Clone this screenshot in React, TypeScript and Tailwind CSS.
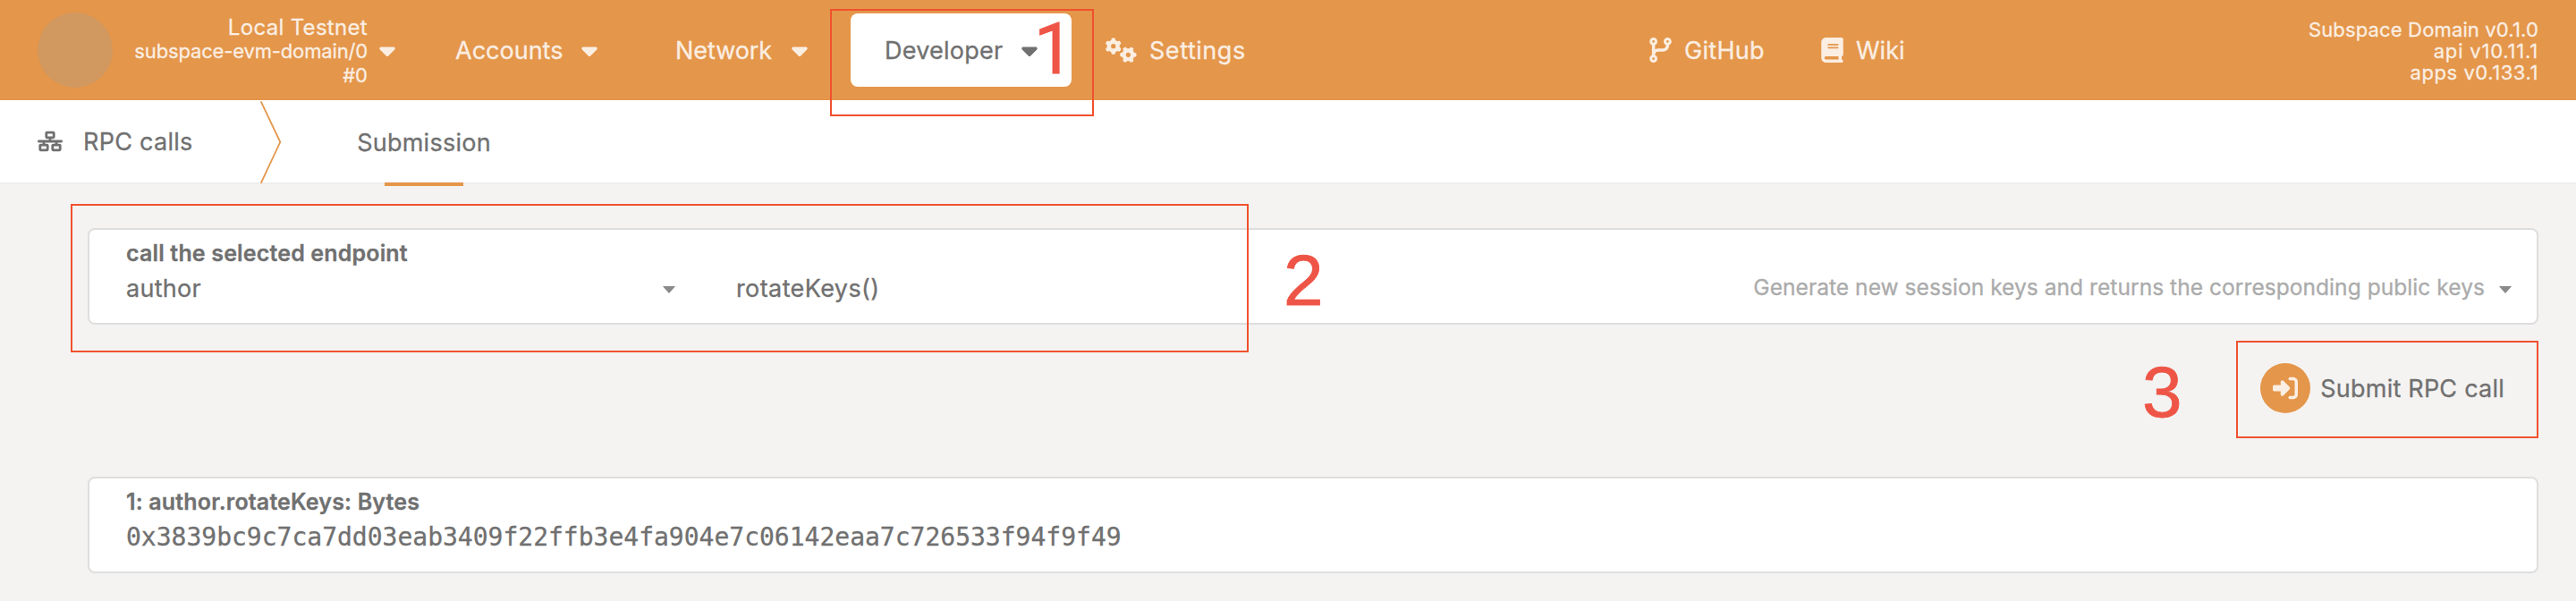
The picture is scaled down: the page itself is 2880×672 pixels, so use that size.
import React from "react";
import {
  FaBook,
  FaCaretDown,
  FaCodeBranch,
  FaGears,
  FaNetworkWired,
  FaRightToBracket,
} from "react-icons/fa6";

function SelectCaret({ className }: { className: string }) {
  return (
    <svg viewBox="0 0 14 8" className={`h-2 w-3.5 shrink-0 fill-[#8a8a8a] ${className}`}>
      <path d="M0.6 0h12.8q.6 0 .3.6L7.5 7.6q-.5.5-1 0L.3.6Q0 0 .6 0z" />
    </svg>
  );
}

function Header() {
  return (
    <header className="flex h-28 items-center bg-[#e4964a] text-[27px] leading-[34px] text-[#fbeee2]">
      <div className="ml-[42px] size-[84px] shrink-0 rounded-full bg-[#d1985f]" />
      <div className="mt-[3px] w-[285px] shrink-0 text-right text-[22px] leading-[27px]">
        <div className="text-[24px] tracking-[0.31px]">Local Testnet</div>
        <div className="tracking-[-0.15px]">subspace-evm-domain/0</div>
        <div>#0</div>
      </div>
      <FaCaretDown className="ml-[13px] h-7 w-[18px] shrink-0" />

      <nav className="flex items-center">
        <div className="ml-[67px] flex w-[159px] items-center justify-between">
          <span className="pt-0.5">Accounts</span>
          <FaCaretDown className="h-7 w-[18px]" />
        </div>
        <div className="ml-[87px] flex w-[148px] items-center justify-between">
          <span className="pt-0.5 tracking-[-0.06px]">Network</span>
          <FaCaretDown className="h-7 w-[18px]" />
        </div>
        <div className="ml-12 flex h-[82px] w-[247px] items-center justify-between rounded-lg bg-white pr-[38px] pl-[38px] text-[#707070]">
          <span className="pt-0.5 tracking-[0.24px]">Developer</span>
          <FaCaretDown className="h-7 w-[18px]" />
        </div>
        <div className="ml-[38px] flex items-center">
          <FaGears className="h-7 w-[35px]" />
          <span className="ml-3.5 w-[109px] pt-0.5 tracking-[0.55px]">Settings</span>
        </div>
      </nav>

      <div className="ml-[450px] flex items-center">
        <FaCodeBranch className="h-7 w-[25px]" />
        <span className="ml-3.5 w-[92px] pt-0.5 tracking-[0.29px]">GitHub</span>
        <FaBook className="ml-[61px] h-7 w-[25px]" />
        <span className="ml-3.5 pt-0.5">Wiki</span>
      </div>

      <div className="mt-0.5 mr-[42px] ml-auto text-right text-[22px] leading-6">
        <div className="tracking-[0.15px]">Subspace Domain v0.1.0</div>
        <div className="tracking-[0.8px]">api v10.11.1</div>
        <div className="tracking-[0.56px]">apps v0.133.1</div>
      </div>
    </header>
  );
}

function TabBar() {
  return (
    <div className="flex h-[94px] items-stretch border-b-2 border-[#efeeed] bg-white text-[27px] leading-[92px]">
      <FaNetworkWired className="mt-[34px] ml-[42px] h-6 w-7 shrink-0" />
      <span className="ml-[23px] w-[198px] pt-px tracking-[0.27px]">RPC calls</span>
      <svg viewBox="0 0 24 94" className="-mb-0.5 h-[94px] w-6 fill-none stroke-[#e4964a]" strokeWidth="1.8">
        <path d="M0.7 1.3L22.3 46.8L0.7 92.8" />
      </svg>
      <div className="-mb-1 ml-[84px] flex w-[150px] flex-col items-center">
        <span className="h-[92px] pt-0.5 tracking-[0.25px]">Submission</span>
        <div className="h-1 w-[88px] shrink-0 bg-[#e4964a]" />
      </div>
    </div>
  );
}

function Card({ label, children }: { label: React.ReactNode; children: React.ReactNode }) {
  return (
    <section className="h-[108px] rounded-lg border-2 border-[#dedede] bg-white pt-2.5 pl-[41px]">
      <div className="text-[25px] leading-8 font-semibold tracking-[0.16px]">{label}</div>
      <div className="mt-1 flex h-10 items-center text-[27px]">{children}</div>
    </section>
  );
}

export default function App() {
  return (
    <div className="relative h-[672px] w-[2880px] overflow-hidden bg-[#f4f3f2] font-['Inter','Liberation_Sans',sans-serif] whitespace-nowrap text-[#707070] [-webkit-text-stroke:0.3px]">
      <Header />
      <TabBar />

      <main className="mr-[42px] ml-[98px] pt-[49px]">
        <Card label="call the selected endpoint">
          <span className="w-[600px] pt-px tracking-[0.28px]">author</span>
          <SelectCaret className="mt-0.5" />
          <span className="ml-[68px] pt-px tracking-[0.4px]">rotateKeys()</span>
          <span className="-mt-1 ml-auto text-[24.5px] tracking-[0.06px] text-[#ababab]">
            Generate new session keys and returns the corresponding public keys
          </span>
          <SelectCaret className="mt-0.5 mr-[28px] ml-4" />
        </Card>

        <div className="mt-[43px] flex h-14 items-center justify-end pr-[38px]">
          <div className="flex size-14 items-center justify-center rounded-full bg-[#e4964a] text-[#fbeee2]">
            <FaRightToBracket className="size-7" />
          </div>
          <span className="mt-[3px] ml-[11px] text-[27px] tracking-[0.23px]">Submit RPC call</span>
        </div>

        <div className="mt-[71px]">
          <Card label="1: author.rotateKeys: Bytes">
            <span className="font-['DejaVu_Sans_Mono',monospace] text-[28px]">
              0x3839bc9c7ca7dd03eab3409f22ffb3e4fa904e7c06142eaa7c726533f94f9f49
            </span>
          </Card>
        </div>
      </main>

      {/* Step annotations laid over the page */}
      <div className="absolute top-2.5 left-[928px] h-[120px] w-[295px] border-2 border-[#f0512e]" />
      <div className="absolute top-[228px] left-[79px] h-[166px] w-[1317px] border-2 border-[#f0512e]" />
      <div className="absolute top-[381px] left-[2500px] h-[109px] w-[338px] border-2 border-[#f0512e]" />
      <div className="absolute top-[15px] left-[1156px] font-['Roboto',sans-serif] text-[79px] leading-[80px] text-[#ee5546] [-webkit-text-stroke:0.8px]">1</div>
      <div className="absolute top-[274px] left-[1435px] font-['Liberation_Sans',sans-serif] text-[80px] leading-[80px] text-[#ee5546] [-webkit-text-stroke:0.8px]">2</div>
      <div className="absolute top-[399px] left-[2395px] font-['Liberation_Sans',sans-serif] text-[80px] leading-[80px] text-[#ee5546] [-webkit-text-stroke:0.8px]">3</div>
    </div>
  );
}
